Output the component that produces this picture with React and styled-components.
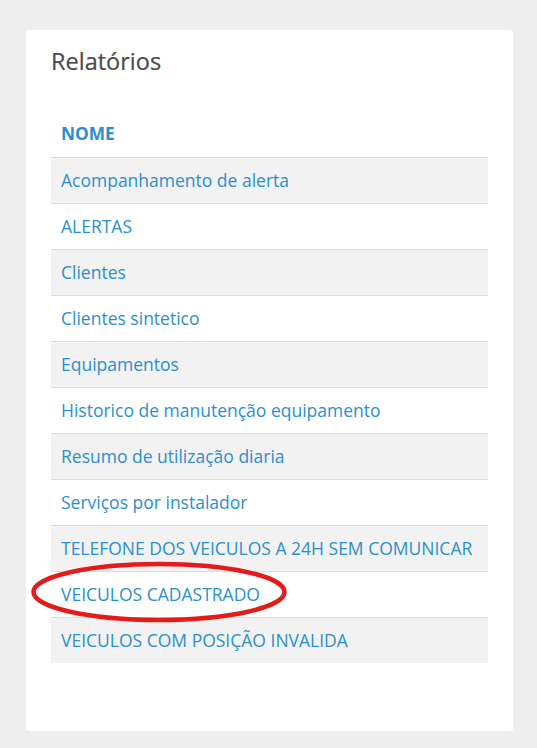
import styled, { createGlobalStyle } from 'styled-components';

const GlobalStyle = createGlobalStyle`
  html, body {
    margin: 0;
    padding: 0;
    background: #eeeeee;
    font-family: 'Open Sans', 'Noto Sans', sans-serif;
  }
`;

const Page = styled.div`
  padding: 30px 24px 17px 26px;
`;

const Card = styled.div`
  position: relative;
  background: #fff;
  border-radius: 3px;
  padding: 19px 25px 68px 25px;
`;

const Title = styled.h2`
  margin: 0 0 38px;
  font-size: 23.5px;
  font-weight: 400;
  line-height: 24px;
  color: #4a4a4a;
  -webkit-text-stroke: 0.2px #4a4a4a;
`;

const Table = styled.div`
  display: flex;
  flex-direction: column;
`;

const HeaderCell = styled.div`
  padding: 12px 10px;
  line-height: 22px;
  font-size: 17.3px;
  font-weight: 700;
  color: #2b8fcf;
`;

const Row = styled.div`
  padding: 12px 10px;
  line-height: 21px;
  font-size: 17.5px;
  color: #2b8fcf;
  border-top: 1px solid #dddddd;
  background: ${(p) => (p.$striped ? '#f2f2f2' : '#fff')};
  white-space: nowrap;
`;

const Highlight = styled.svg`
  position: absolute;
  left: 3px;
  top: 530px;
  width: 264px;
  height: 66px;
  pointer-events: none;
`;

const reports = [
  'Acompanhamento de alerta',
  'ALERTAS',
  'Clientes',
  'Clientes sintetico',
  'Equipamentos',
  'Historico de manutenção equipamento',
  'Resumo de utilização diaria',
  'Serviços por instalador',
  'TELEFONE DOS VEICULOS A 24H SEM COMUNICAR',
  'VEICULOS CADASTRADO',
  'VEICULOS COM POSIÇÃO INVALIDA',
];

export default function App() {
  return (
    <>
      <GlobalStyle />
      <Page>
        <Card>
          <Title>Relatórios</Title>
          <Table>
            <HeaderCell>NOME</HeaderCell>
            {reports.map((name, i) => (
              <Row key={name} $striped={i % 2 === 0}>
                {name}
              </Row>
            ))}
          </Table>
          <Highlight viewBox="0 0 264 66">
            <ellipse cx="130" cy="32" rx="125.5" ry="28" fill="none" stroke="#e31b1b" strokeWidth="4.5" />
          </Highlight>
        </Card>
      </Page>
    </>
  );
}
